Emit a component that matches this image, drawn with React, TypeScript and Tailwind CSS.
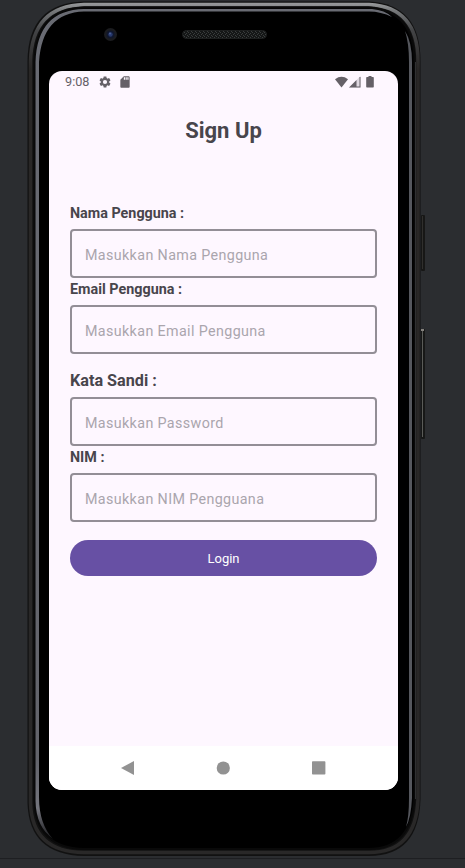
import React from "react";

function PhoneFrame() {
  return (
    <svg className="absolute inset-0 z-0" width="465" height="868" viewBox="0 0 465 868" fill="none" aria-hidden="true">
      <defs>
        <linearGradient id="rim" x1="0" y1="0" x2="0" y2="868" gradientUnits="userSpaceOnUse">
          <stop offset="0" stopColor="#a5a7a9" />
          <stop offset="0.012" stopColor="#77797b" />
          <stop offset="0.035" stopColor="#434446" />
          <stop offset="0.08" stopColor="#292726" />
          <stop offset="1" stopColor="#292828" />
        </linearGradient>
        <linearGradient id="leftShine" x1="0" y1="9" x2="0" y2="842" gradientUnits="userSpaceOnUse">
          <stop offset="0" stopColor="#696b73" />
          <stop offset="0.9" stopColor="#63646b" />
          <stop offset="0.96" stopColor="#74757d" />
          <stop offset="1" stopColor="#111113" />
        </linearGradient>
        <pattern id="mesh" width="4" height="4" patternUnits="userSpaceOnUse">
          <rect width="4" height="4" fill="#151717" />
          <path d="M0 0h1v1H0zM2 1h1v1H2zM1 2h1v1H1zM3 3h1v1H3z" fill="#3a3d3d" />
        </pattern>
      </defs>
      <path d="M0 858.5H465" stroke="#1e1f22" />
      <rect x="421" y="215" width="4" height="56" rx="1" fill="#171716" />
      <path d="M422.5 216v53" stroke="#302f2d" />
      <rect x="421" y="329" width="4" height="110" rx="1" fill="#171817" />
      <path d="M422.5 331v106" stroke="#5a5b58" />
      <rect x="421" y="329" width="3" height="2" fill="#85827e" />
      <path d="M84 1.5H369Q420.5 4 420.5 61V799Q419 856 369 856H84Q29 855 27.5 803V61Q28 3 84 1.5Z" fill="#111111" />
      <path d="M84 4.5H369Q418 7 418 61V799Q416 852.5 369 852.5H84Q32 852 30.5 803V61Q32 6 84 4.5Z" stroke="url(#rim)" strokeWidth="3.5" />
      <path d="M84 7.5H368Q414.5 10 414.5 62V798Q412 849 368 849H84Q36 848 34.5 801V62Q36 9 84 7.5Z" fill="#000" stroke="#090909" strokeWidth="2" />
      <path d="M35.5 801V62Q37 10 84 9H372Q385 10 392 17Q381 11.5 369 11.5H84Q42 13 39 62V797Q39 824 53 839Q36 827 35.5 801Z" fill="url(#leftShine)" />
      <path d="M405 31Q412 42 412 62V798Q411 818 406 827Q409 817 409 798V62Q409 43 405 31Z" fill="#55575d" />
      <path d="M415.5 62V799" stroke="#303132" strokeWidth="1" />
      <circle cx="110.5" cy="34.5" r="6.5" fill="#1b1c1f" />
      <circle cx="110.5" cy="34.5" r="4" fill="#10172d" />
      <circle cx="110.5" cy="34.5" r="2.2" fill="#26386c" />
      <circle cx="110" cy="33.5" r="0.9" fill="#50639a" />
      <rect x="182.5" y="30.5" width="84" height="8" rx="4" fill="url(#mesh)" stroke="#1d1f1f" />
    </svg>
  );
}

function StatusBar() {
  return (
    <div className="flex h-[22px] items-center pl-4 pr-6 text-[#656067]">
      <span className="w-6 text-[12.7px] leading-[22px]">9:08</span>
      <svg className="ml-[9px]" width="14" height="14" viewBox="0 0 24 24" fill="currentColor">
        <path d="M19.14 12.94c.04-.3.06-.61.06-.94 0-.32-.02-.64-.07-.94l2.03-1.58c.18-.14.23-.41.12-.61l-1.92-3.32c-.12-.22-.37-.29-.59-.22l-2.39.96c-.5-.38-1.03-.7-1.62-.94l-.36-2.54c-.04-.24-.24-.41-.48-.41h-3.84c-.24 0-.43.17-.47.41l-.36 2.54c-.59.24-1.13.57-1.62.94l-2.39-.96c-.22-.08-.47 0-.59.22L2.74 8.87c-.12.21-.08.47.12.61l2.03 1.58c-.05.3-.09.63-.09.94s.02.64.07.94l-2.03 1.58c-.18.14-.23.41-.12.61l1.92 3.32c.12.22.37.29.59.22l2.39-.96c.5.38 1.03.7 1.62.94l.36 2.54c.05.24.24.41.48.41h3.84c.24 0 .44-.17.47-.41l.36-2.54c.59-.24 1.13-.56 1.62-.94l2.39.96c.22.08.47 0 .59-.22l1.92-3.32c.12-.22.07-.47-.12-.61l-2.01-1.58zM12 15.6A3.6 3.6 0 1 1 12 8.4a3.6 3.6 0 0 1 0 7.2z" />
      </svg>
      <svg className="ml-[6px]" width="14" height="14" viewBox="0 0 24 24" fill="currentColor">
        <path d="M18 2h-8L4.02 8 4 20c0 1.1.9 2 2 2h12c1.1 0 2-.9 2-2V4c0-1.1-.9-2-2-2zm-6 6h-2V4h2v4zm3 0h-2V4h2v4zm3 0h-2V4h2v4z" />
      </svg>
      <div className="ml-auto flex items-center">
        <svg width="13" height="12" viewBox="0 0 13 12" fill="currentColor">
          <path d="M0 3.2Q6.5-1.6 13 3.2L6.5 11.5Z" />
        </svg>
        <svg className="ml-[1px]" width="12" height="12" viewBox="0 0 12 12" fill="currentColor">
          <path d="M0 11.5L11.5 0V11.5Z" fillOpacity="0.2" />
          <path d="M0 11.5L7.5 4V11.5ZM10.5 1h1v10.5H7.5v-1h3Z" />
        </svg>
        <svg className="ml-[5px]" width="8" height="12" viewBox="0 0 8 12" fill="currentColor">
          <path d="M2.5 0h3v1h1.6q.7 0 .7.7v9.1q0 .7-.7.7H.9q-.7 0-.7-.7V1.700q0-.7.7-.7h1.6Z" />
        </svg>
      </div>
    </div>
  );
}

type FieldProps = { id: string; label: string; placeholder: string; type?: string; large?: boolean };

function Field({ id, label, placeholder, type = "text", large = false }: FieldProps) {
  return (
    <div className="flex flex-col">
      <label htmlFor={id} className={`${large ? "text-[16.2px] leading-[22px]" : "text-[14.35px] leading-6"} mb-[5px] h-[22px] font-bold text-[#48454c]`}>
        {label}
      </label>
      <input
        id={id}
        type={type}
        placeholder={placeholder}
        className="h-[49px] w-full rounded-[4px] border-2 border-[#938e96] bg-transparent px-[13px] pt-[2px] text-[14.3px] tracking-[0.37px] text-[#48454c] outline-none placeholder:text-[#aaa5ad]"
      />
    </div>
  );
}

function NavigationBar() {
  return (
    <nav className="flex h-[44px] items-center justify-between bg-white px-[72px]">
      <svg width="13" height="14" viewBox="0 0 13 14" fill="#929292"><path d="M13 0v14L0 7Z" /></svg>
      <svg width="14" height="14" viewBox="0 0 14 14" fill="#929292"><circle cx="7.3" cy="7" r="6.6" /></svg>
      <svg width="14" height="14" viewBox="0 0 14 14" fill="#929292"><rect x="0" y=".2" width="13.4" height="13.4" rx=".8" /></svg>
    </nav>
  );
}

export default function App() {
  return (
    <main className="relative h-[868px] w-[465px] overflow-hidden bg-[#2b2d30] pl-[49px] pt-[71px] font-['Roboto',sans-serif]">
      <PhoneFrame />
      <section className="relative z-10 flex h-[719px] w-[349px] flex-col overflow-hidden rounded-[13px] bg-[#fef7ff]">
        <StatusBar />
        <h1 className="mt-[22px] text-center text-[22px] font-bold leading-[31px] text-[#48454c]">Sign Up</h1>
        <form className="mt-[56px] flex flex-1 flex-col px-[21px]" onSubmit={(event) => event.preventDefault()}>
          <Field id="name" label="Nama Pengguna :" placeholder="Masukkan Nama Pengguna" />
          <Field id="email" label="Email Pengguna :" placeholder="Masukkan Email Pengguna" />
          <div className="h-4" />
          <Field id="password" type="password" label="Kata Sandi :" placeholder="Masukkan Password" large />
          <Field id="nim" label="NIM :" placeholder="Masukkan NIM Pengguana" />
          <button className="mt-[18px] h-9 rounded-full bg-[#6750a4] pt-[2px] text-[13px] font-normal text-white">Login</button>
        </form>
        <NavigationBar />
      </section>
    </main>
  );
}
